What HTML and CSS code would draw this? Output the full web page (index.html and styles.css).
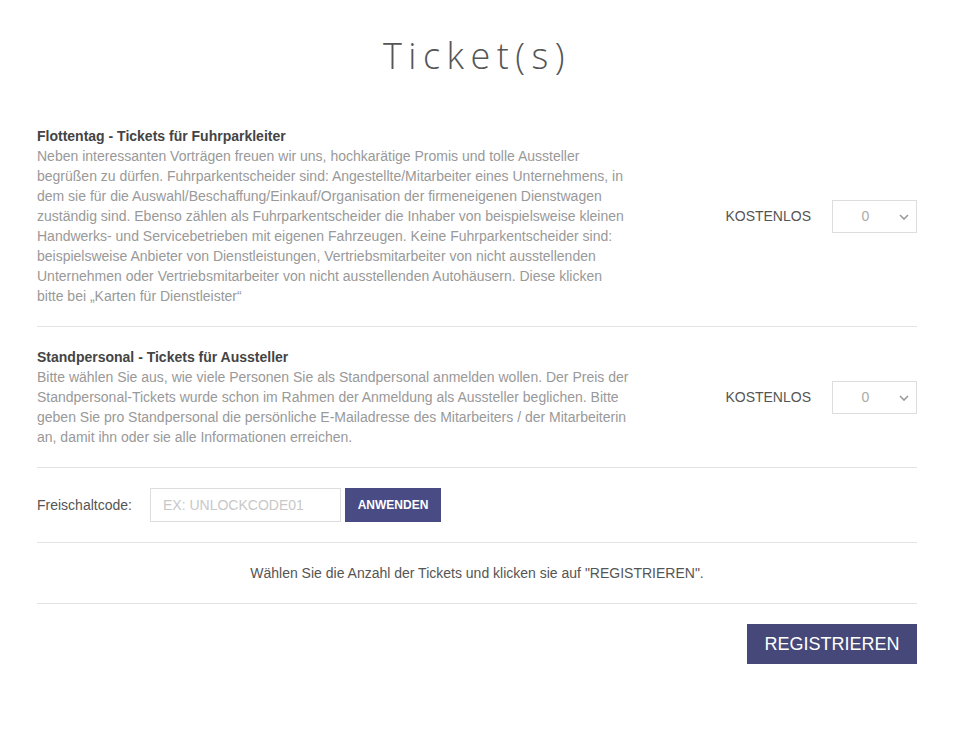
FILE: index.html
```html
<!DOCTYPE html>
<html lang="de">
<head>
  <meta charset="UTF-8">
  <title>Ticket(s)</title>
  <link rel="stylesheet" href="styles.css">
</head>
<body>
  <div class="page">
    <h1 class="headline">Ticket(s)</h1>

    <div class="ticket">
      <div class="ticket-info">
        <div class="ticket-name">Flottentag - Tickets für Fuhrparkleiter</div>
        <div class="ticket-desc">Neben interessanten Vorträgen freuen wir uns, hochkarätige Promis und tolle Aussteller begrüßen zu dürfen. Fuhrparkentscheider sind: Angestellte/Mitarbeiter eines Unternehmens, in dem sie für die Auswahl/Beschaffung/Einkauf/Organisation der firmeneigenen Dienstwagen zuständig sind. Ebenso zählen als Fuhrparkentscheider die Inhaber von beispielsweise kleinen Handwerks- und Servicebetrieben mit eigenen Fahrzeugen. Keine Fuhrparkentscheider sind: beispielsweise Anbieter von Dienstleistungen, Vertriebsmitarbeiter von nicht ausstellenden Unternehmen oder Vertriebsmitarbeiter von nicht ausstellenden Autohäusern. Diese klicken bitte bei „Karten für Dienstleister“</div>
      </div>
      <div class="ticket-price">KOSTENLOS</div>
      <div class="qty">
        <select class="qty-select">
          <option>0</option>
          <option>1</option>
          <option>2</option>
        </select>
        <svg class="qty-arrow" width="10" height="6" viewBox="0 0 10 6"><path d="M1 1l4 4 4-4" fill="none" stroke="#999" stroke-width="1.6"/></svg>
      </div>
    </div>

    <div class="ticket">
      <div class="ticket-info">
        <div class="ticket-name">Standpersonal - Tickets für Aussteller</div>
        <div class="ticket-desc">Bitte wählen Sie aus, wie viele Personen Sie als Standpersonal anmelden wollen. Der Preis der Standpersonal-Tickets wurde schon im Rahmen der Anmeldung als Aussteller beglichen. Bitte geben Sie pro Standpersonal die persönliche E-Mailadresse des Mitarbeiters / der Mitarbeiterin an, damit ihn oder sie alle Informationen erreichen.</div>
      </div>
      <div class="ticket-price">KOSTENLOS</div>
      <div class="qty">
        <select class="qty-select">
          <option>0</option>
          <option>1</option>
          <option>2</option>
        </select>
        <svg class="qty-arrow" width="10" height="6" viewBox="0 0 10 6"><path d="M1 1l4 4 4-4" fill="none" stroke="#999" stroke-width="1.6"/></svg>
      </div>
    </div>

    <div class="code-row">
      <label for="code">Freischaltcode:</label>
      <input type="text" id="code" placeholder="EX: UNLOCKCODE01">
      <button class="btn-apply">ANWENDEN</button>
    </div>

    <div class="hint">Wählen Sie die Anzahl der Tickets und klicken sie auf "REGISTRIEREN".</div>

    <div class="submit-row">
      <button class="btn-submit">REGISTRIEREN</button>
    </div>
  </div>
</body>
</html>
```

FILE: styles.css
```css
body { margin: 0; font-family: "Liberation Sans", Arial, sans-serif; font-size: 14px; line-height: 20px; color: #555; background: #fff; }
.page { width: 880px; margin: 0 auto; padding-top: 34px; }
.headline { margin: 0 0 28px; text-align: center; font-family: "Open Sans", sans-serif; font-weight: 300; font-size: 36px; line-height: 44px; letter-spacing: 6.5px; color: #555; }
.ticket { display: flex; align-items: center; padding: 20px 0; border-bottom: 1px solid #e3e3e3; }
.ticket-info { width: 593px; }
.ticket-name { font-weight: bold; color: #444; }
.ticket-desc { color: #999; }
.ticket-price { margin-left: auto; margin-right: 21px; color: #555; }
.qty { position: relative; width: 85px; height: 33px; }
.qty-select { width: 85px; height: 33px; border: 1px solid #ddd; background: #fff; color: #aaa; font-family: inherit; font-size: 14px; text-align: center; text-align-last: center; appearance: none; -webkit-appearance: none; padding: 0 18px 0 0; border-radius: 0; }
.qty-arrow { position: absolute; right: 8px; top: 14px; pointer-events: none; }
.code-row { display: flex; align-items: center; padding: 20px 0; border-bottom: 1px solid #e3e3e3; }
.code-row label { width: 113px; color: #555; }
.code-row input { width: 191px; height: 34px; box-sizing: border-box; border: 1px solid #ddd; padding: 0 12px; font-family: inherit; font-size: 14px; color: #555; }
.code-row input::placeholder { color: #c8c8c8; }
.btn-apply { margin-left: 4px; height: 34px; width: 96px; border: 0; background: #484b84; color: #fff; font-family: inherit; font-size: 12px; font-weight: bold; }
.hint { text-align: center; padding: 20px 0; border-bottom: 1px solid #e3e3e3; color: #555; }
.submit-row { display: flex; justify-content: flex-end; padding-top: 20px; }
.btn-submit { width: 170px; height: 40px; border: 0; background: #464879; color: #fff; font-family: inherit; font-size: 18px; }
```
